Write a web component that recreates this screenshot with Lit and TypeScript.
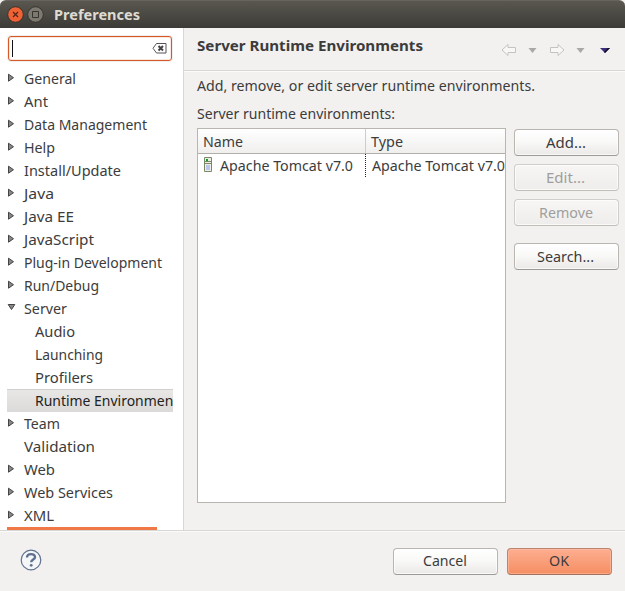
import { LitElement, html, css, svg, nothing } from "lit";
import { customElement } from "lit/decorators.js";
import { classMap } from "lit/directives/class-map.js";

type Row = { label: string; state?: "open" | "closed"; child?: boolean; selected?: boolean; width: number };

const ROWS: Row[] = [
  { label: "General", state: "closed", width: 52 },
  { label: "Ant", state: "closed", width: 24 },
  { label: "Data Management", state: "closed", width: 123 },
  { label: "Help", state: "closed", width: 31 },
  { label: "Install/Update", state: "closed", width: 97 },
  { label: "Java", state: "closed", width: 30 },
  { label: "Java EE", state: "closed", width: 50 },
  { label: "JavaScript", state: "closed", width: 70 },
  { label: "Plug-in Development", state: "closed", width: 138 },
  { label: "Run/Debug", state: "closed", width: 75 },
  { label: "Server", state: "open", width: 43 },
  { label: "Audio", child: true, width: 40 },
  { label: "Launching", child: true, width: 68 },
  { label: "Profilers", child: true, width: 58 },
  { label: "Runtime Environments", child: true, selected: true, width: 150 },
  { label: "Team", state: "closed", width: 36 },
  { label: "Validation", width: 71 },
  { label: "Web", state: "closed", width: 31 },
  { label: "Web Services", state: "closed", width: 89 },
  { label: "XML", state: "closed", width: 30 },
];

// Label stretched or condensed to a fixed advance width.
const label = (text: string, width: number, cls = "") => html`<svg class="label ${cls}" width=${width} height="20">
  ${svg`<text x="0" y="15" textLength=${width} lengthAdjust="spacingAndGlyphs">${text}</text>`}
</svg>`;

@customElement("app-root")
export class AppRoot extends LitElement {
  static styles = css`
    * { box-sizing: border-box; }
    :host {
      display: flex; flex-direction: column; width: 625px; height: 591px; overflow: hidden;
      background: #f2f1f0; color: #3c3c3c; font: 14.3px "Noto Sans", "Open Sans", sans-serif;
    }
    svg { display: block; flex: none; }
    .label { overflow: visible; fill: currentColor; }
    .bold { font-weight: 700; font-size: 14px; }
    .title { height: 28px; display: flex; align-items: center; padding-left: 7px; gap: 3px; flex: none;
      background: linear-gradient(#59574f, #3c3b37); border-top: 1px solid #66645c; border-radius: 6px 6px 0 0; color: #dfdbd2; }
    .title .label { margin-left: 7px; }
    .main { display: flex; height: 502px; }
    .side { width: 184px; background: #fff; border-right: 1px solid #d9d7d5; padding: 8px 0 0 7px; flex: none; }
    .search { margin-left: 1px; width: 164px; height: 25px; border: 1px solid #d4592b; border-radius: 3px;
      box-shadow: inset 0 0 0 1px #f4b49b55, 0 0 0 1px #f1efed; display: flex; align-items: center; justify-content: space-between; padding: 0 4px 0 3px; }
    .caret { width: 1px; height: 17px; background: #111; }
    .tree { margin-top: 6px; width: 166px; }
    .row { height: 23px; display: flex; align-items: center; overflow: hidden; }
    .row .arrow { width: 17px; }
    .child { padding-left: 28px; }
    .selected { background: linear-gradient(#e8e7e6, #dbdad8); border-top: 1px solid #d2d0ce; color: #222; }
    .bar { width: 150px; height: 3px; background: #f07746; }
    .content { flex: 1; display: flex; flex-direction: column; }
    .head { height: 43px; border-bottom: 1px solid #d9d7d5; box-shadow: 0 1px #fafafa; display: flex; padding: 8px 14px 0 13px; justify-content: space-between; }
    .nav { margin-top: 7px; }
    .body { padding: 5px 6px 0 13px; }
    .intro { height: 20px; }
    .caption { height: 20px; margin-top: 8px; }
    .cols { display: flex; gap: 8px; margin-top: 4px; }
    .table { width: 309px; height: 375px; border: 1px solid #b9b6b2; background: #fff; overflow: hidden; }
    .thead { display: flex; height: 25px; background: linear-gradient(#fff, #f0efee); border-bottom: 1px solid #b2afab; }
    .thead div { padding: 3px 0 0 5px; }
    .name { width: 168px; border-right: 1px solid #cfccc9; }
    .trow { display: flex; height: 23px; align-items: center; }
    .cell { width: 168px; height: 23px; display: flex; align-items: center; padding-left: 6px; gap: 8px; border-right: 1px dotted #222; }
    .cell svg:first-child { margin-top: -3px; }
    .type { padding-left: 6px; }
    .buttons { display: flex; flex-direction: column; gap: 8px; padding-top: 1px; }
    .btn { width: 105px; height: 27px; display: flex; justify-content: center; align-items: center; padding-right: 2px; border: 1px solid #b9b6b2; border-bottom-color: #9c9996; border-radius: 4px;
      background: linear-gradient(#fff, #f9f9f8 45%, #ebe9e7); box-shadow: inset 0 0 0 1px #ffffffb0; }
    .off { color: #a09e9c; border-color: #d0cecb; border-bottom-color: #c1beba; background: linear-gradient(#f7f6f5, #eeedeb); }
    .gap { margin-top: 9px; }
    .ok { background: linear-gradient(#fdae90, #f58e63); border-color: #b98571; border-bottom-color: #a46f5b; box-shadow: inset 0 0 0 1px #ffc5ad80; }
    .foot { height: 61px; border-top: 1px solid #d9d7d5; box-shadow: inset 0 1px #fafafa; display: flex; align-items: center; padding: 0 13px 0 20px; gap: 9px; }
    .help { margin-right: auto; margin-top: -2px; }
  `;

  render() {
    return html`
      <header class="title">
        <svg width="17" height="17" viewBox="0 0 17 17"><circle cx="8.5" cy="8.5" r="7.8" fill="#ef6236" stroke="#35322d"/><path d="M6 6l5 5M11 6l-5 5" stroke="#512413" stroke-width="1.2"/></svg>
        <svg width="17" height="17" viewBox="0 0 17 17"><circle cx="8.5" cy="8.5" r="7.8" fill="#7b7970" stroke="#35342f"/><path d="M5.500 5.500h6v6h-6z" fill="none" stroke="#35342f"/></svg>
        ${label("Preferences", 86, "bold")}
      </header>
      <main class="main">
        <nav class="side">
          <div class="search"><span class="caret"></span>
            <svg width="15" height="11" viewBox="0 0 15 11"><path d="M4.500.5h9.500v9.500h-9.500L1 5.300z" fill="#fff" stroke="#555"/><path d="M6.500 3l4.500 4.500M11 3l-4.500 4.500" stroke="#444" stroke-width="2"/></svg>
          </div>
          <div class="tree">
            ${ROWS.map((r) => html`<div class=${classMap({ row: true, child: !!r.child, selected: !!r.selected })}>
              ${r.child ? nothing : html`<svg class="arrow" width="17" height="12" viewBox="0 0 17 12">
                ${r.state === "closed" ? svg`<path d="M1.500 1.200v7l5-3.500z" fill="#888" stroke="#444"/>` : nothing}
                ${r.state === "open" ? svg`<path d="M1.200 1.500h6.600l-3.300 5z" fill="#888" stroke="#444"/>` : nothing}</svg>`}
              ${label(r.label, r.width)}</div>`)}
          </div>
          <div class="bar"></div>
        </nav>
        <section class="content">
          <div class="head">${label("Server Runtime Environments", 226, "bold")}
            <svg class="nav" width="110" height="14" viewBox="0 0 110 14">
              <path d="M1 7l6-5.500v3h7.500v5h-7.500v3z" fill="#f7f7f6" stroke="#c5c3c1"/><path d="M27.500 5h8l-4 5z" fill="#a9a8a7"/>
              <path d="M63 7l-6-5.500v3h-7.500v5h7.500v3z" fill="#f7f7f6" stroke="#c5c3c1"/><path d="M75.500 5h8l-4 5z" fill="#a9a8a7"/><path d="M99 5h10l-5 5z" fill="#3a2f78"/><path d="M109 5l-5 5-1-1 4-4z" fill="#0c0a20"/>
            </svg>
          </div>
          <div class="body">
            <div class="intro">${label("Add, remove, or edit server runtime environments.", 338)}</div>
            <div class="caption">${label("Server runtime environments:", 198)}</div>
            <div class="cols">
              <div class="table">
                <div class="thead"><div class="name">${label("Name", 40)}</div><div>${label("Type", 32)}</div></div>
                <div class="trow"><div class="cell">
                  <svg width="8" height="15" viewBox="0 0 8 15"><path d="M.5.5h7v14h-7z" fill="#edf0e5" stroke="#7b8768"/><path d="M1 4.500h6M1 6.500h6" stroke="#7b8768"/><path d="M2 2h2v2H2z" fill="#0a9a2b"/><path d="M2 8h4v5H2z" fill="#bcc6ec"/></svg>
                  ${label("Apache Tomcat v7.0", 133)}</div><div class="type">${label("Apache Tomcat v7.0", 133)}</div></div>
              </div>
              <div class="buttons">
                <div class="btn">${label("Add...", 40)}</div>
                <div class="btn off">${label("Edit...", 39)}</div>
                <div class="btn off">${label("Remove", 54)}</div>
                <div class="btn gap">${label("Search...", 57)}</div>
              </div>
            </div>
          </div>
        </section>
      </main>
      <footer class="foot">
        <svg class="help" width="22" height="22" viewBox="0 0 22 22"><circle cx="11" cy="11" r="9.800" fill="#f5f6f8" stroke="#60708f" stroke-width="1.200"/><path d="M7 8.500C7 4 15 4 15 8.200c0 2.500-3.800 2.300-3.800 5.100" fill="none" stroke="#60708f" stroke-width="2.400"/><circle cx="11.200" cy="16.300" r="1.400" fill="#60708f"/></svg>
        <div class="btn">${label("Cancel", 44)}</div>
        <div class="btn ok">${label("OK", 20)}</div>
      </footer>`;
  }
}
